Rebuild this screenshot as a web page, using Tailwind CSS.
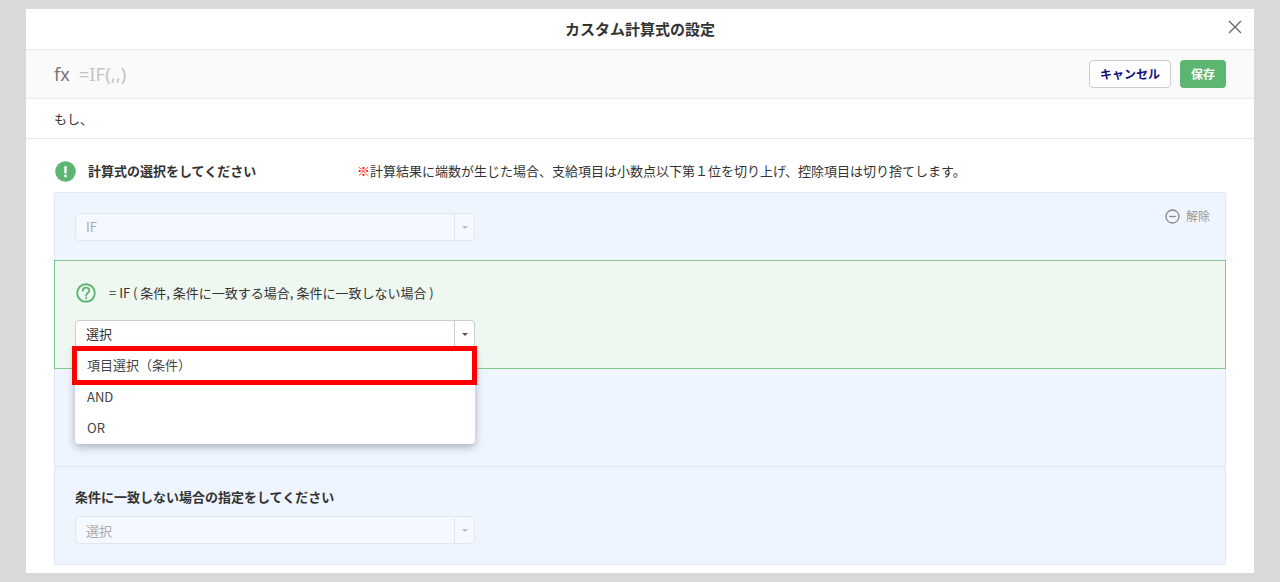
<!DOCTYPE html>
<html lang="ja">
<head>
<meta charset="utf-8">
<script src="https://cdn.jsdelivr.net/npm/@tailwindcss/browser@4"></script>
</head>
<body class="m-0 h-[582px] overflow-hidden bg-[#d9d9d9] pt-[9px] px-[26px] font-['Noto_Sans_CJK_JP','Noto_Sans',sans-serif] text-[#333]">
<div class="relative h-[564px] bg-white">
  <!-- title -->
  <div class="relative flex h-[41px] items-center justify-center border-b border-[#e8e8e8]">
    <span class="text-[15px] font-bold text-[#333]">カスタム計算式の設定</span>
    <svg class="absolute right-[12px] top-[11px]" width="14" height="14" viewBox="0 0 14 14" fill="none" stroke="#666" stroke-width="1.3"><path d="M1 1l12 12M13 1L1 13"/></svg>
  </div>
  <!-- formula bar -->
  <div class="flex h-[49px] items-center justify-between border-b border-[#e8e8e8] bg-[#fafafa] pl-[28px] pr-[28px]">
    <div class="flex items-center gap-[9px] font-['Noto_Sans',sans-serif] text-[18px]">
      <span class="text-[#777]">fx</span><span class="text-[18.5px] text-[#c4c4c4]">=IF(,,)</span>
    </div>
    <div class="flex items-center gap-[9px]">
      <button class="h-[28px] w-[82px] rounded-[4px] border border-[#ccc] bg-white text-[12px] font-bold text-[#14147a]">キャンセル</button>
      <button class="h-[28px] w-[46px] rounded-[4px] bg-[#5cb570] text-[12px] font-bold text-white">保存</button>
    </div>
  </div>
  <!-- もし -->
  <div class="flex h-[40px] items-center border-b border-[#e8e8e8] pl-[28px] text-[13px] text-[#333]">もし、</div>
  <!-- heading -->
  <div class="flex h-[53px] items-center pl-[29px] pt-[11px]">
    <svg width="21" height="21" viewBox="0 0 21 21"><circle cx="10.5" cy="10.5" r="10.3" fill="#5cb570"/><rect x="9.3" y="5" width="2.4" height="7.4" rx="1" fill="#fff"/><circle cx="10.5" cy="15" r="1.4" fill="#fff"/></svg>
    <span class="ml-[12px] w-[269px] text-[13px] font-bold text-[#333]">計算式の選択をしてください</span>
    <span class="text-[13px] text-[#333]"><span class="text-[#f00]">※</span>計算結果に端数が生じた場合、支給項目は小数点以下第１位を切り上げ、控除項目は切り捨てします。</span>
  </div>
  <!-- panel -->
  <div class="mx-[28px] h-[373px] border border-[#e6eaf0] bg-[#eff5fe]">
    <div class="relative h-[67px] pl-[20px] pt-[20px]">
      <div class="flex h-[28px] w-[400px] items-center rounded-[4px] border border-[#e2e7ef] bg-[#f4f8ff]">
        <span class="flex-1 pl-[10px] text-[13px] text-[#aaa]">IF</span>
        <span class="flex h-full w-[20px] items-center justify-center border-l border-[#e2e7ef]"><span class="h-0 w-0 border-x-[3px] border-t-[3px] border-x-transparent border-t-[#bbb]"></span></span>
      </div>
      <div class="absolute right-[15px] top-[14px] flex items-center gap-[6px] text-[12px] text-[#999]">
        <svg width="15" height="15" viewBox="0 0 15 15" fill="none" stroke="#888" stroke-width="1.3"><circle cx="7.5" cy="7.5" r="6.5"/><path d="M4.2 7.5h6.6"/></svg>
        <span>解除</span>
      </div>
    </div>
    <!-- green box -->
    <div class="-mx-px h-[109px] border border-[#7fcb8f] bg-[#eef7f0] pl-[20px] pt-[21px]">
      <div class="ml-[1px] flex h-[22px] items-center">
        <svg width="20" height="20" viewBox="0 0 20 20" fill="none"><circle cx="10" cy="10" r="8.8" stroke="#5cb570" stroke-width="1.9"/><path d="M6.8 7.8c0-1.9 1.4-3.1 3.3-3.1s3.2 1.2 3.2 2.8c0 1.4-.9 2-1.8 2.7-.8.6-1.3 1.1-1.3 2.1v.4" stroke="#5cb570" stroke-width="1.8" stroke-linecap="round"/><circle cx="10.2" cy="15.1" r="1.1" fill="#5cb570"/></svg>
        <span class="ml-[13px] text-[13px] text-[#333]">= IF ( 条件, 条件に一致する場合, 条件に一致しない場合 )</span>
      </div>
      <div class="mt-[16px] flex h-[28px] w-[400px] items-center rounded-t-[4px] border border-[#ccc] bg-white">
        <span class="flex-1 pl-[10px] text-[13px] text-[#333]">選択</span>
        <span class="flex h-full w-[20px] items-center justify-center border-l border-[#ccc]"><span class="h-0 w-0 border-x-[3px] border-t-[3px] border-x-transparent border-t-[#555]"></span></span>
      </div>
    </div>
    <!-- middle -->
    <div class="h-[98px] border-b border-[#e0e6ef]"></div>
    <!-- bottom -->
    <div class="pl-[20px] pt-[20px]">
      <div class="flex h-[20px] items-center text-[13px] font-bold text-[#333]">条件に一致しない場合の指定をしてください</div>
      <div class="mt-[9px] flex h-[28px] w-[400px] items-center rounded-[4px] border border-[#e2e7ef] bg-[#f4f8ff] pt-[1px]">
        <span class="flex-1 pl-[10px] text-[13px] text-[#aaa]">選択</span>
        <span class="flex h-full w-[20px] items-center justify-center border-l border-[#e2e7ef]"><span class="h-0 w-0 border-x-[3px] border-t-[3px] border-x-transparent border-t-[#bbb]"></span></span>
      </div>
    </div>
  </div>
  <!-- dropdown menu -->
  <div class="absolute left-[49px] top-[339px] w-[400px] rounded-b-[4px] bg-white pt-[1px] pb-[1px] text-[13px] text-[#444] shadow-[0_3px_8px_rgba(60,70,90,0.4)]">
    <div class="flex h-[32px] items-center pb-[1px] pl-[12px]">項目選択（条件）</div>
    <div class="flex h-[31px] items-center pl-[12px]">AND</div>
    <div class="flex h-[31px] items-center pl-[12px]">OR</div>
  </div>
  <!-- annotation -->
  <div class="absolute left-[46px] top-[337px] h-[39px] w-[405px] border-[5px] border-[#f00]"></div>
</div>
</body>
</html>
